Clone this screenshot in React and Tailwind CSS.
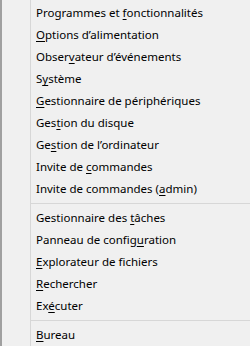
import React from 'react'

// Win+X menu (Windows 8, French)
const groups = [
  [
    ['Programmes et ', 'f', 'onctionnalités'],
    ['', 'O', 'ptions d’alimentation'],
    ['Obser', 'v', 'ateur d’événements'],
    ['S', 'y', 'stème'],
    ['', 'G', 'estionnaire de périphériques'],
    ['Ges', 't', 'ion du disque'],
    ['Ge', 's', 'tion de l’ordinateur'],
    ['Invite de ', 'c', 'ommandes'],
    ['Invite de commandes (', 'a', 'dmin)'],
  ],
  [
    ['Gestionnaire des ', 't', 'âches'],
    ['Panneau de config', 'u', 'ration'],
    ['', 'E', 'xplorateur de fichiers'],
    ['', 'R', 'echercher'],
    ['Ex', 'é', 'cuter'],
  ],
  [['', 'B', 'ureau']],
]

function Item({ parts }) {
  const [a, key, b] = parts
  return (
    <div className="h-[22px] flex items-center pl-[5px]">
      <span className="whitespace-pre">
        {a}
        <span className="underline underline-offset-[2px]">{key}</span>
        {b}
      </span>
    </div>
  )
}

export default function App() {
  return (
    <div
      className="w-[250px] h-[346px] flex bg-[#f0f0f0] text-black text-[11.5px] overflow-hidden"
      style={{ fontFamily: '"Noto Sans", sans-serif' }}
    >
      <div className="w-[2px] bg-[#a0a0a0]" />
      <div className="w-[28px]" />
      <div className="w-px bg-[#d7d7d7]" />
      <div className="flex-1 flex flex-col pt-[2px]">
        {groups.map((g, i) => (
          <div key={i}>
            {i > 0 && (
              <div className="h-[7px] flex flex-col pt-[3px]">
                <div className="h-px bg-[#d7d7d7]" />
              </div>
            )}
            {g.map((p, j) => (
              <Item key={j} parts={p} />
            ))}
          </div>
        ))}
      </div>
    </div>
  )
}
